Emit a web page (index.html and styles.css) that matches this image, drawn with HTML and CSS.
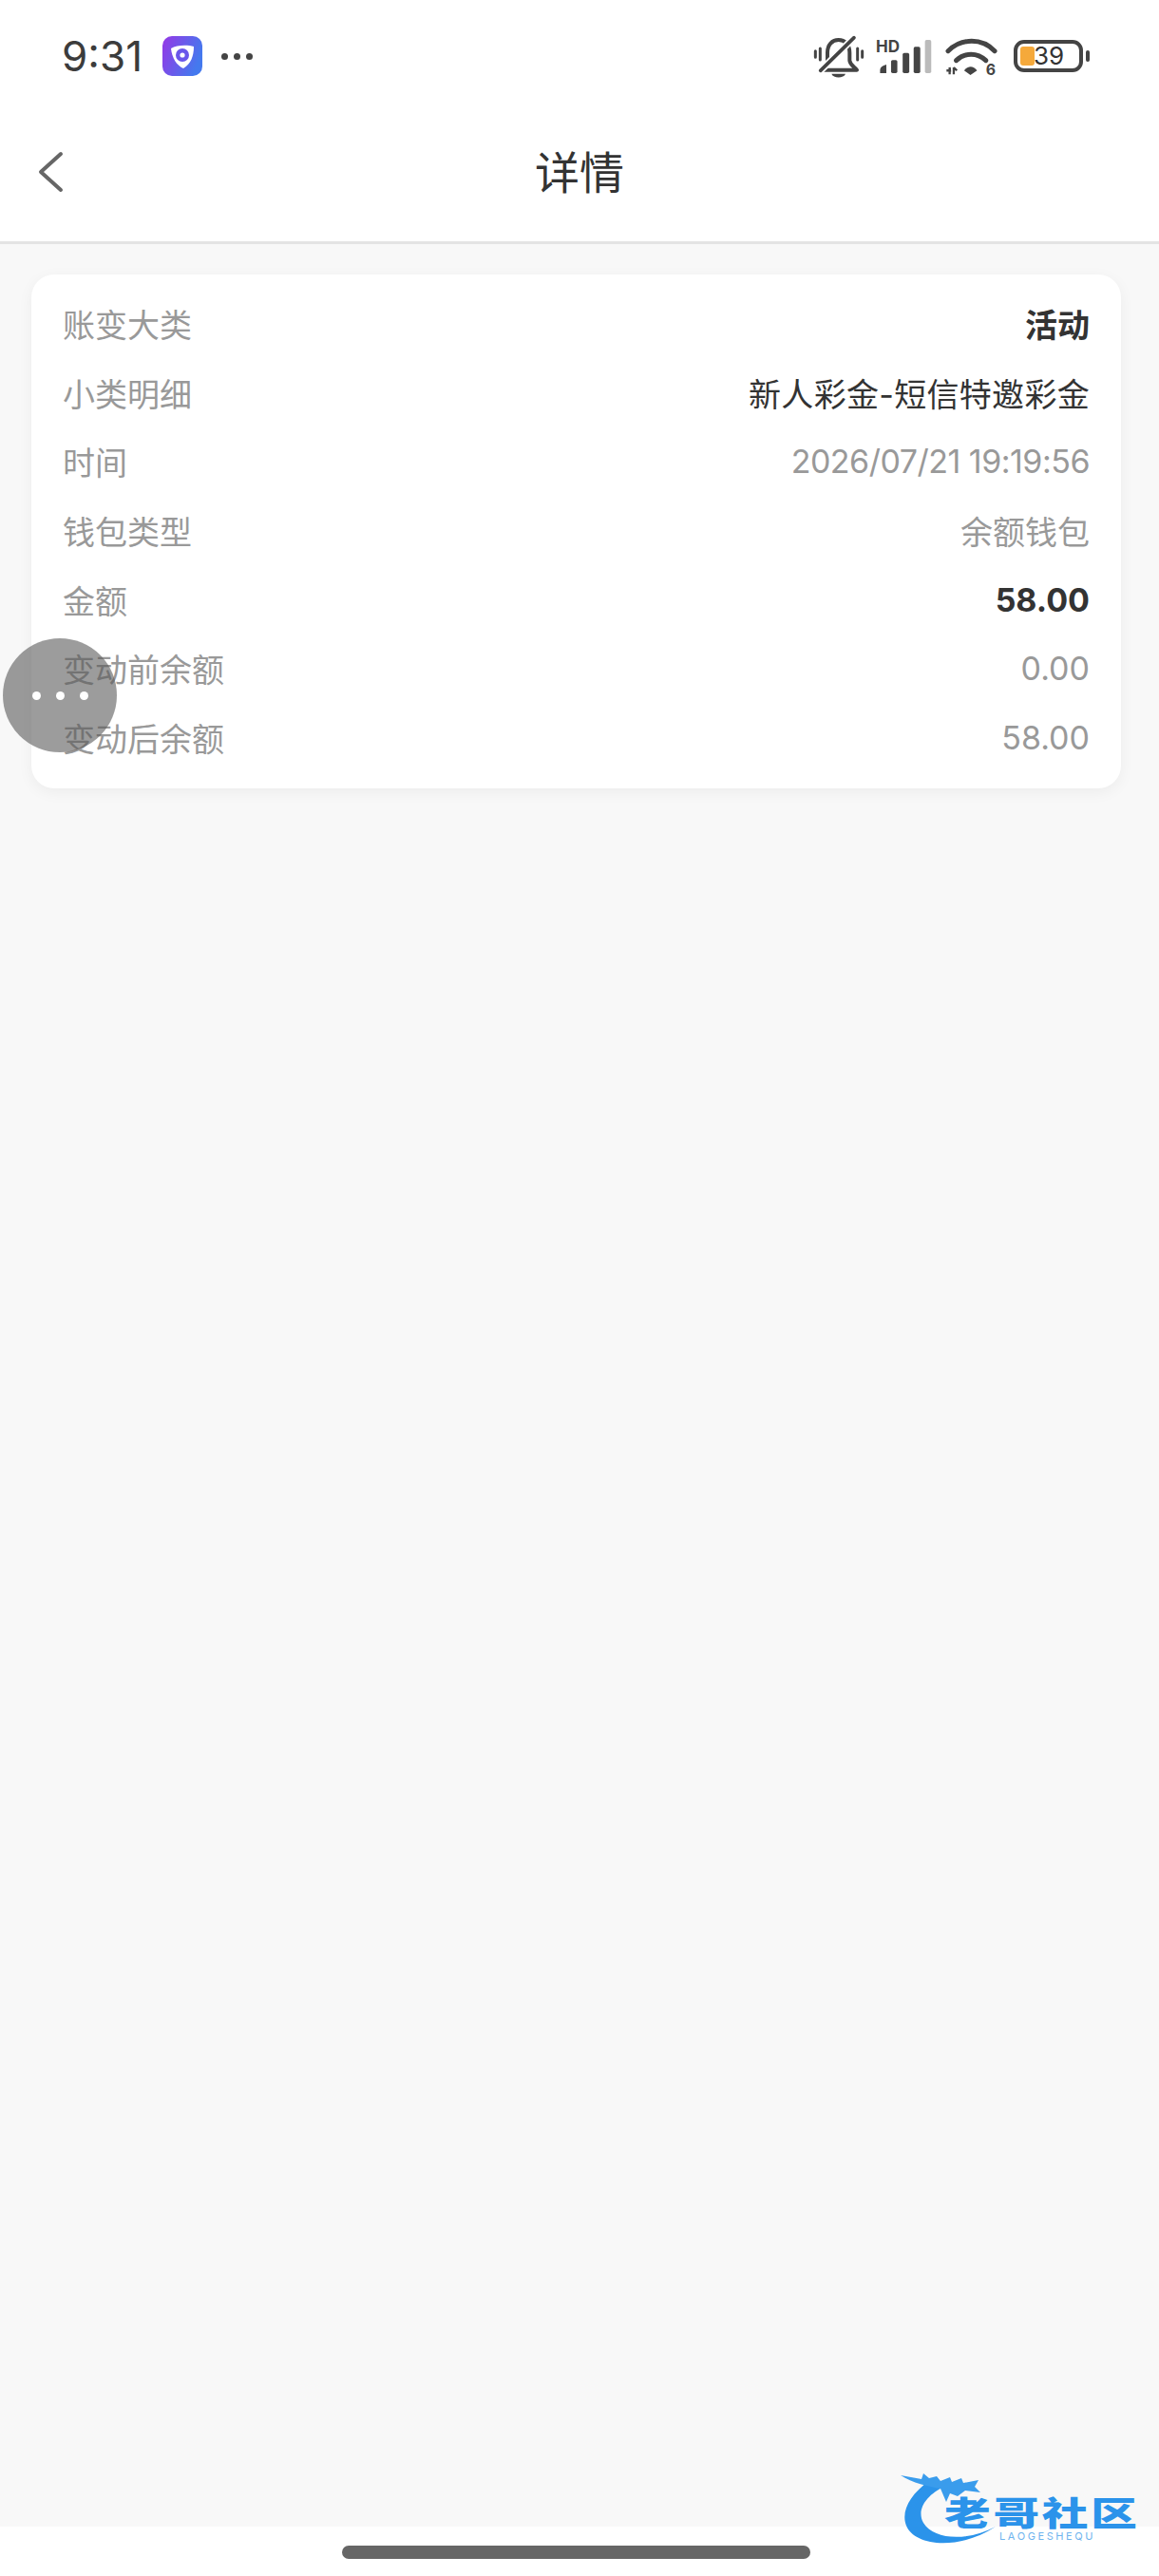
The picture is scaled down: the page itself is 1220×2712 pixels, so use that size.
FILE: index.html
```html
<!DOCTYPE html>
<html lang="zh-CN">
<head>
    <title>详情</title>
    <link rel="stylesheet" href="styles.css">
</head>
<body>
    <div class="status-bar">
        <span class="clock">9:31</span>
        <svg class="app-icon" viewBox="0 0 42 42">
            <defs>
                <linearGradient id="appGrad" x1="0" y1="0" x2="1" y2="0.4">
                    <stop offset="0" stop-color="#9637e6"/>
                    <stop offset="1" stop-color="#4479ee"/>
                </linearGradient>
            </defs>
            <rect width="42" height="42" rx="10" fill="url(#appGrad)"/>
            <path d="M9 13 C15 9 27 9 33 11 C33 21 30 29 22 34 C15 31 10 23 9 13 Z" fill="#fff"/>
            <circle cx="21" cy="20" r="7" fill="#6a56ea"/>
            <circle cx="21" cy="20" r="2.6" fill="#fff"/>
        </svg>
        <span class="more-dots"><i></i><i></i><i></i></span>
        <div class="status-icons">
            <svg class="ico-bell" viewBox="105 110 162 135">
                <path d="M150 205 V165 C150 140 165 125 185 125 C205 125 220 140 220 165 V190 C222 205 235 210 243 220 H130" fill="none" stroke="#444" stroke-width="12" stroke-linejoin="round"/>
                <path d="M128 222 L234 118" stroke="#fff" stroke-width="22"/>
                <path d="M128 222 L234 118" stroke="#444" stroke-width="11" stroke-linecap="round"/>
                <path d="M112 160 V180 M127 152 V188 M245 152 V188 M260 160 V180" stroke="#444" stroke-width="9" stroke-linecap="round"/>
                <path d="M163 232 H207 C202 247 168 247 163 232 Z" fill="#444"/>
            </svg>
            <div class="signal">
                <span class="hd">HD</span>
                <svg viewBox="300 120 185 115">
                    <path d="M315 222 Q315 210 335 205 V232 H315 Z" fill="#444"/>
                    <rect x="350" y="190" width="20" height="42" rx="5" fill="#444"/>
                    <rect x="387" y="168" width="21" height="64" rx="5" fill="#444"/>
                    <rect x="422" y="148" width="21" height="84" rx="5" fill="#444"/>
                    <rect x="458" y="126" width="20" height="106" rx="5" fill="#bbb"/>
                </svg>
            </div>
            <svg class="ico-wifi" viewBox="520 115 175 140">
                <path d="M532 162 C575 120 640 120 680 162" fill="none" stroke="#444" stroke-width="15" stroke-linecap="round"/>
                <path d="M558 192 C585 166 625 166 652 192" fill="none" stroke="#444" stroke-width="15" stroke-linecap="round"/>
                <path d="M583 224 C595 208 612 208 624 224 L603 238 Z" fill="#444"/>
                <path d="M527 224 H538 L537 214 V236 M550 236 V214 M550 214 L560 224" fill="none" stroke="#444" stroke-width="7"/>
                <text x="652" y="238" class="wifi-six">6</text>
            </svg>
            <div class="battery">
                <span class="battery-fill"></span>
                <span class="battery-num">39</span>
            </div>
            <span class="battery-nub"></span>
        </div>
    </div>

    <header class="nav-bar">
        <svg class="back-icon" viewBox="0 0 30 44">
            <path d="M26 3 L5 22 L26 41" fill="none" stroke="#666" stroke-width="4" stroke-linecap="round" stroke-linejoin="round"/>
        </svg>
        <h1 class="nav-title">详情</h1>
    </header>

    <main class="content">
        <div class="card">
            <div class="row"><span class="row-label">账变大类</span><span class="row-value strong">活动</span></div>
            <div class="row"><span class="row-label">小类明细</span><span class="row-value dark">新人彩金-短信特邀彩金</span></div>
            <div class="row"><span class="row-label">时间</span><span class="row-value time">2026/07/21 19:19:56</span></div>
            <div class="row"><span class="row-label">钱包类型</span><span class="row-value">余额钱包</span></div>
            <div class="row"><span class="row-label">金额</span><span class="row-value strong">58.00</span></div>
            <div class="row"><span class="row-label">变动前余额</span><span class="row-value">0.00</span></div>
            <div class="row"><span class="row-label">变动后余额</span><span class="row-value">58.00</span></div>
        </div>
    </main>

    <div class="home-area"><span class="home-bar"></span></div>

    <div class="float-ball"><i></i><i></i><i></i></div>

    <div class="watermark">
        <svg class="dragon" viewBox="0 0 130 90">
            <path d="M30 8 C10 22 0 40 6 55 C14 76 60 82 100 56 C70 72 35 70 24 52 C16 38 28 22 46 14 Z" fill="#2b93ea"/>
            <path d="M0 2 L22 6 L24 0 L30 5 L38 3 L42 8 L52 4 L54 9 L64 5 L66 10 L82 7 L78 14 L84 20 L68 18 L60 24 L52 21 L48 30 L42 16 C30 14 12 10 0 2 Z" fill="#3a9cec"/>
        </svg>
        <span class="wm-title">老哥社区</span>
        <span class="wm-sub">LAOGESHEQU</span>
    </div>
</body>
</html>
```

FILE: styles.css
```css
* {
    box-sizing: border-box;
}
body {
    margin: 0;
    height: 2712px;
    display: flex;
    flex-direction: column;
    position: relative;
    overflow: hidden;
    font-family: Inter, "Noto Sans CJK SC", sans-serif;
    background-color: #f8f8f8;
}
.status-bar {
    height: 110px;
    flex: none;
    display: flex;
    align-items: center;
    padding: 8px 0 0 65px;
    background-color: #fff;
}
.clock {
    width: 106px;
    font-size: 44px;
    line-height: 1;
    color: #3c3c3c;
}
.app-icon {
    width: 42px;
    height: 42px;
}
.more-dots {
    display: flex;
    gap: 6px;
    margin-left: 20px;
}
.more-dots i {
    width: 7px;
    height: 7px;
    border-radius: 50%;
    background-color: #444;
}
.status-icons {
    display: flex;
    align-items: center;
    margin-left: auto;
    margin-right: 80px;
}
.ico-bell {
    width: 54px;
    height: 45px;
    margin-right: 11px;
}
.signal {
    position: relative;
    width: 62px;
    height: 38px;
    margin-right: 11px;
}
.signal svg {
    width: 62px;
    height: 38px;
    display: block;
}
.hd {
    position: absolute;
    left: 1px;
    top: 1px;
    font-size: 17px;
    line-height: 1;
    font-weight: 700;
    color: #444;
}
.ico-wifi {
    width: 58px;
    height: 46.7px;
    margin-top: 5px;
    margin-right: 15px;
}
.wifi-six {
    font-family: Inter, sans-serif;
    font-size: 48px;
    font-weight: 700;
    fill: #444;
}
.battery {
    position: relative;
    width: 73px;
    height: 34px;
    border: 4px solid #444;
    border-radius: 11px;
}
.battery-fill {
    position: absolute;
    left: 3px;
    top: 3px;
    width: 15px;
    height: 20px;
    border-radius: 3px;
    background-color: #f5a93b;
}
.battery-num {
    position: absolute;
    left: 17px;
    top: 0;
    font-size: 26px;
    line-height: 26px;
    color: #333;
}
.battery-nub {
    position: absolute;
    right: 73px;
    top: 53px;
    width: 4px;
    height: 12px;
    border-radius: 2px;
    background-color: #444;
}
.nav-bar {
    height: 147px;
    flex: none;
    display: flex;
    align-items: center;
    justify-content: center;
    position: relative;
    padding-bottom: 7px;
    background-color: #fff;
    border-bottom: 3px solid #e4e4e4;
}
.back-icon {
    position: absolute;
    left: 38px;
    top: 49px;
    width: 30px;
    height: 44px;
}
.nav-title {
    margin: 0;
    font-size: 47px;
    font-weight: 400;
    color: #333;
}
.content {
    flex: 1;
    padding: 32px 40px 0 33px;
}
.card {
    padding: 15px 33px 17px 33px;
    background-color: #fff;
    border-radius: 24px;
    box-shadow: 0 4px 16px rgba(0, 0, 0, 0.05);
}
.row {
    height: 72.7px;
    display: flex;
    align-items: center;
    justify-content: space-between;
    font-size: 34px;
}
.row-label,
.row-value {
    color: #999;
}
.row-value.time {
    letter-spacing: -0.5px;
}
.row-value.dark {
    color: #333;
    letter-spacing: 0.3px;
}
.row-value.strong {
    color: #333;
    font-weight: 700;
}
.home-area {
    height: 52px;
    flex: none;
    display: flex;
    justify-content: flex-start;
    padding: 20px 0 0 360px;
    background-color: #fff;
}
.home-bar {
    width: 493px;
    height: 14px;
    border-radius: 7px;
    background-color: #666;
}
.float-ball {
    position: absolute;
    left: 3px;
    top: 672px;
    width: 120px;
    height: 120px;
    display: flex;
    align-items: center;
    justify-content: center;
    gap: 16px;
    border-radius: 50%;
    background-color: rgba(90, 90, 90, 0.6);
}
.float-ball i {
    width: 9px;
    height: 9px;
    border-radius: 50%;
    background-color: #fff;
}
.watermark {
    position: absolute;
    left: 948px;
    top: 2604px;
    width: 260px;
    height: 78px;
}
.dragon {
    position: absolute;
    left: 0;
    top: 0;
    width: 130px;
    height: 90px;
}
.wm-title {
    position: absolute;
    left: 46px;
    top: 22px;
    font-family: "Noto Sans CJK SC", sans-serif;
    font-size: 35px;
    line-height: 36px;
    font-weight: 900;
    letter-spacing: 2px;
    white-space: nowrap;
    color: #2b93ea;
    transform: scaleX(1.39);
    transform-origin: left center;
}
.wm-sub {
    position: absolute;
    left: 104px;
    top: 60px;
    font-size: 11px;
    line-height: 12px;
    letter-spacing: 2.6px;
    color: #6fb4ee;
}
```
